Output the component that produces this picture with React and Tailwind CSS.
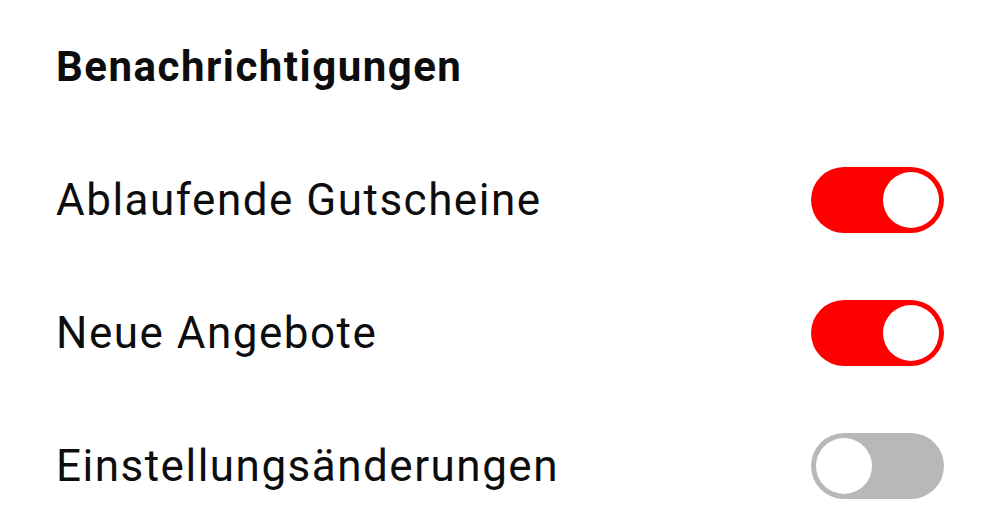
import { useState } from "react"

const items = [
  { label: "Ablaufende Gutscheine", on: true },
  { label: "Neue Angebote", on: true },
  { label: "Einstellungsänderungen", on: false },
]

function Toggle({ on, onClick }) {
  return (
    <button
      onClick={onClick}
      className={`flex h-[66px] w-[133px] items-center rounded-full p-[5px] ${on ? "justify-end bg-[#ff0000]" : "justify-start bg-[#b8b8b8]"}`}
    >
      <span className="h-[56px] w-[56px] rounded-full bg-white" />
    </button>
  )
}

export default function App() {
  const [state, setState] = useState(items.map((i) => i.on))

  return (
    <div className="flex h-[532px] w-[1000px] flex-col bg-white px-[56px] font-['Roboto',sans-serif] text-[#0d0d0d]">
      <div className="flex h-[133px] items-center">
        <h1 className="text-[42px] font-bold tracking-[1.5px]">Benachrichtigungen</h1>
      </div>
      {items.map((item, i) => (
        <div key={item.label} className="flex h-[133px] items-center justify-between">
          <span className="text-[44px] tracking-[1.5px]">{item.label}</span>
          <Toggle
            on={state[i]}
            onClick={() => setState((s) => s.map((v, j) => (j === i ? !v : v)))}
          />
        </div>
      ))}
    </div>
  )
}
